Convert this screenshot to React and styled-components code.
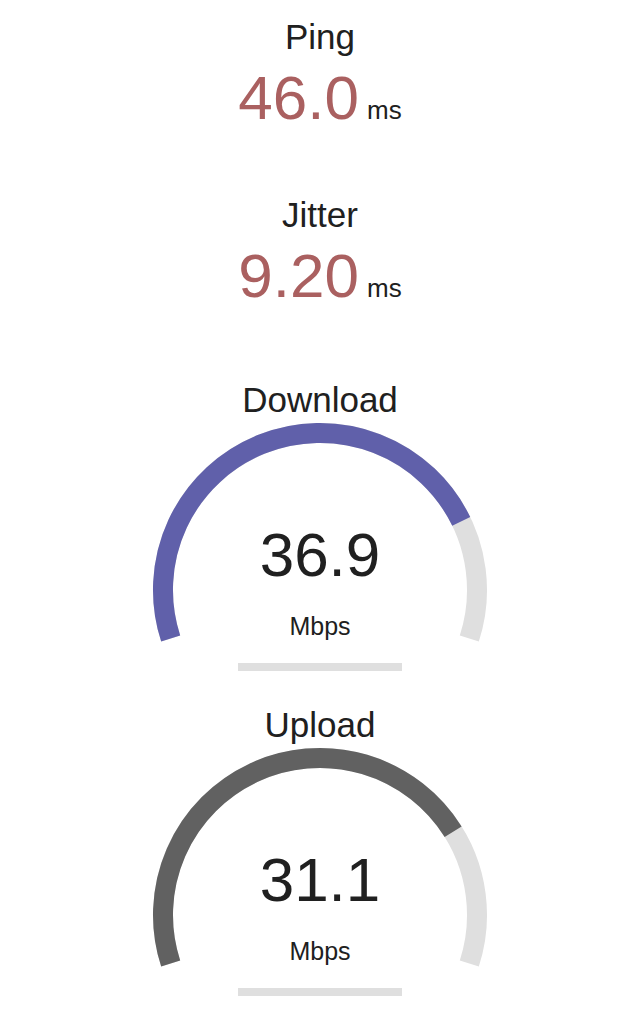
import React from 'react';
import styled, { createGlobalStyle } from 'styled-components';

const GlobalStyle = createGlobalStyle`
  html, body {
    margin: 0;
    padding: 0;
    background: #ffffff;
  }
  body {
    font-family: "Liberation Sans", Arial, Helvetica, sans-serif;
    color: #202020;
  }
`;

const Page = styled.div`
  display: flex;
  flex-direction: column;
  align-items: center;
  padding-top: 17px;
  width: 640px;
  height: 1031px;
  box-sizing: border-box;
  overflow: hidden;
`;

const TestBlock = styled.div`
  display: flex;
  flex-direction: column;
  align-items: center;
  margin-bottom: ${p => p.$gap}px;
`;

const TestName = styled.div`
  font-size: 35px;
  line-height: 40px;
  height: 40px;
`;

const ValueRow = styled.div`
  margin-top: 10px;
  font-size: 62px;
  line-height: 62px;
  height: 62px;
  white-space: nowrap;
`;

const MeterText = styled.span`
  color: ${p => p.$color};
`;

const Unit = styled.span`
  font-size: 26px;
  line-height: 1;
  margin-left: 8px;
  color: #202020;
`;

const Gauge = styled.div`
  position: relative;
  width: 340px;
  height: 230px;
  box-sizing: border-box;
  padding-top: 105px;
  display: flex;
  flex-direction: column;
  align-items: center;
`;

const GaugeArt = styled.svg`
  position: absolute;
  top: 0;
  left: 0;
`;

const GaugeValue = styled.div`
  position: relative;
  font-size: 62px;
  line-height: 60px;
  height: 60px;
`;

const GaugeUnit = styled.div`
  position: relative;
  margin-top: 29px;
  font-size: 25px;
  line-height: 25px;
`;

const ProgressTrack = styled.div`
  margin-top: 13px;
  width: 164px;
  height: 8px;
  background: #dfdfdf;
`;

const CX = 170;
const CY = 170;
const R = 157;
const START = -198;
const SPAN = 216;

const polar = (deg) => {
  const a = (deg * Math.PI) / 180;
  return [CX + R * Math.cos(a), CY + R * Math.sin(a)];
};

const arcPath = (from, to) => {
  const [x1, y1] = polar(from);
  const [x2, y2] = polar(to);
  const large = to - from > 180 ? 1 : 0;
  return `M ${x1.toFixed(2)} ${y1.toFixed(2)} A ${R} ${R} 0 ${large} 1 ${x2.toFixed(2)} ${y2.toFixed(2)}`;
};

// same curve the speedtest uses to turn Mbps into a meter fraction
const mbpsToAmount = (s) => 1 - 1 / Math.pow(1.3, Math.sqrt(s));

const SpeedGauge = ({ title, value, color, gap }) => {
  const amount = mbpsToAmount(parseFloat(value));
  return (
    <TestBlock $gap={gap}>
      <TestName>{title}</TestName>
      <Gauge>
        <GaugeArt width="340" height="230" viewBox="0 0 340 230">
          <path d={arcPath(START, START + SPAN)} fill="none" stroke="#dfdfdf" strokeWidth="20" />
          <path d={arcPath(START, START + SPAN * amount)} fill="none" stroke={color} strokeWidth="20" />
        </GaugeArt>
        <GaugeValue>{value}</GaugeValue>
        <GaugeUnit>Mbps</GaugeUnit>
      </Gauge>
      <ProgressTrack />
    </TestBlock>
  );
};

const LatencyTest = ({ title, value, gap }) => (
  <TestBlock $gap={gap}>
    <TestName>{title}</TestName>
    <ValueRow>
      <MeterText $color="#aa6060">{value}</MeterText>
      <Unit>ms</Unit>
    </ValueRow>
  </TestBlock>
);

export default function App() {
  return (
    <>
      <GlobalStyle />
      <Page>
        <LatencyTest title="Ping" value="46.0" gap={66} />
        <LatencyTest title="Jitter" value="9.20" gap={73} />
        <SpeedGauge title="Download" value="36.9" color="#6060aa" gap={34} />
        <SpeedGauge title="Upload" value="31.1" color="#616161" gap={0} />
      </Page>
    </>
  );
}
